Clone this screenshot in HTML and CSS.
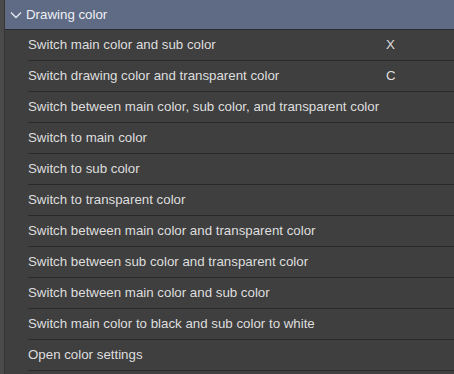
FILE: index.html
```html
<!DOCTYPE html>
<html lang="en">
<head>
  <meta charset="UTF-8">
  <title>Shortcut settings – Drawing color</title>
  <link rel="stylesheet" href="styles.css">
</head>
<body>
  <div class="panel">
    <div class="side"></div>
    <div class="tree">
      <div class="group-head">
        <svg class="chevron" width="12" height="8" viewBox="0 0 12 8">
          <polyline points="1,1.5 6,6.5 11,1.5" fill="none" stroke="#e6e8ee" stroke-width="1.3"/>
        </svg>
        <span>Drawing color</span>
      </div>
      <ul class="items">
        <li><span class="name">Switch main color and sub color</span><span class="key">X</span></li>
        <li><span class="name">Switch drawing color and transparent color</span><span class="key">C</span></li>
        <li><span class="name">Switch between main color, sub color, and transparent color</span></li>
        <li><span class="name">Switch to main color</span></li>
        <li><span class="name">Switch to sub color</span></li>
        <li><span class="name">Switch to transparent color</span></li>
        <li><span class="name">Switch between main color and transparent color</span></li>
        <li><span class="name">Switch between sub color and transparent color</span></li>
        <li><span class="name">Switch between main color and sub color</span></li>
        <li><span class="name">Switch main color to black and sub color to white</span></li>
        <li><span class="name">Open color settings</span></li>
      </ul>
    </div>
  </div>
</body>
</html>
```

FILE: styles.css
```css
body {
  margin: 0;
  background: #3f3f3f;
  font-family: "Liberation Sans", Arial, sans-serif;
  font-size: 13.3px;
  color: #dedede;
  overflow: hidden;
}

.panel {
  display: flex;
  height: 374px;
}

.side {
  width: 4px;
  background: #4a4a4a;
  border-right: 1px solid #353535;
}

.tree {
  flex: 1;
}

.group-head {
  display: flex;
  align-items: center;
  height: 28px;
  padding-bottom: 1px;
  background: #5f6a84;
  border-bottom: 1px solid #2c2c2c;
  color: #eef0f5;
}

.chevron {
  margin: 2px 4px 0 5px;
}

.items {
  list-style: none;
  margin: 0;
  padding: 0 0 0 23px;
}

.items li {
  display: flex;
  align-items: center;
  height: 28px;
  padding-bottom: 2px;
  border-bottom: 1px solid #2a2a2a;
}

.name {
  width: 358px;
  white-space: nowrap;
}
```
